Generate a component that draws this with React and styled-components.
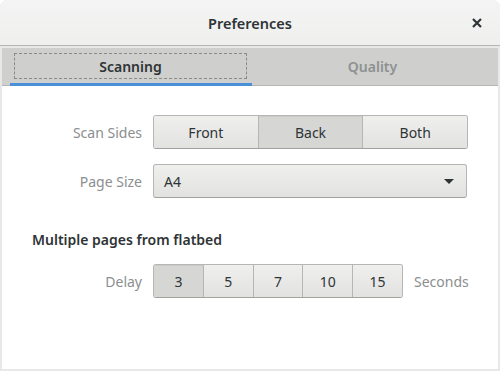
import styled, { createGlobalStyle } from 'styled-components';

const GlobalStyle = createGlobalStyle`
  html, body {
    margin: 0;
    background: #ffffff;
  }
  * { box-sizing: border-box; }
`;

const Window = styled.div`
  width: 500px;
  height: 371px;
  display: flex;
  flex-direction: column;
  font-family: "Noto Sans", "Open Sans", sans-serif;
  color: #2e3436;
  border-radius: 7px 7px 0 0;
  overflow: hidden;
  background: #e8e8e7;
`;

const HeaderBar = styled.div`
  height: 46px;
  flex: none;
  display: grid;
  grid-template-columns: 1fr auto 1fr;
  align-items: center;
  background: linear-gradient(#f4f4f4, #efefee);
  border-bottom: 1px solid #b6b6b3;
`;

const Title = styled.div`
  grid-column: 2;
  font-size: 14.5px;
  font-weight: 600;
  color: #2e3436;
`;

const CloseButton = styled.div`
  grid-column: 3;
  justify-self: end;
  margin-right: 16px;
  width: 14px;
  height: 14px;
  display: flex;
  align-items: center;
  justify-content: center;
`;

const Frame = styled.div`
  flex: 1;
  display: flex;
  flex-direction: column;
  padding: 2px;
`;

const TabBar = styled.div`
  height: 38px;
  flex: none;
  display: flex;
  padding: 0 4px 0 8px;
  background: #cfcfcd;
  border-bottom: 1px solid #b6b6b3;
`;

const Tab = styled.div`
  flex: 1;
  display: flex;
  padding: 5px 5px 4px 4px;
  border-bottom: 3px solid ${p => (p.$active ? '#4a90d9' : 'transparent')};
  margin-bottom: -1px;
`;

const TabLabel = styled.div`
  flex: 1;
  display: flex;
  align-items: center;
  justify-content: center;
  font-size: 14px;
  font-weight: 600;
  color: ${p => (p.$active ? '#2e3436' : '#8e9192')};
  border: 1px dashed ${p => (p.$focused ? '#8a8a88' : 'transparent')};
`;

const Page = styled.div`
  flex: 1;
  background: #ffffff;
  padding: 29px 31px 0 28px;
  display: flex;
  flex-direction: column;
`;

const Row = styled.div`
  display: grid;
  grid-template-columns: 112px auto auto;
  justify-content: start;
  column-gap: 11px;
  align-items: center;
  margin-bottom: ${p => p.$gap || 0}px;
`;

const Label = styled.div`
  font-size: 14px;
  color: #8b8e8f;
  text-align: right;
`;

const Linked = styled.div`
  display: flex;
  width: ${p => p.$width}px;
  height: 34px;
  border: 1px solid #b6b6b3;
  border-bottom-color: #a1a19e;
  border-radius: 3px;
  overflow: hidden;
`;

const Segment = styled.div`
  flex: 1;
  display: flex;
  align-items: center;
  justify-content: center;
  font-size: 14px;
  color: #2e3436;
  background: ${p =>
    p.$pressed ? '#d6d6d4' : 'linear-gradient(#efefee, #e2e2e0)'};
  box-shadow: ${p => (p.$pressed ? 'inset 0 1px 1px rgba(0,0,0,0.06)' : 'none')};
  & + & {
    border-left: 1px solid #b6b6b3;
  }
`;

const Combo = styled.div`
  width: 314px;
  height: 34px;
  display: flex;
  align-items: center;
  justify-content: space-between;
  padding: 0 10px;
  border: 1px solid #b6b6b3;
  border-bottom-color: #a1a19e;
  border-radius: 3px;
  background: linear-gradient(#efefee, #e2e2e0);
  font-size: 14px;
`;

const Arrow = styled.div`
  width: 0;
  height: 0;
  border-left: 5px solid transparent;
  border-right: 5px solid transparent;
  border-top: 5px solid #2e3436;
  margin-right: 2px;
`;

const SectionTitle = styled.div`
  font-size: 14px;
  font-weight: 600;
  color: #2e3436;
  margin: 0 0 15px 2px;
`;

const Unit = styled.div`
  font-size: 14px;
  color: #8b8e8f;
`;

const sides = ['Front', 'Back', 'Both'];
const delays = ['3', '5', '7', '10', '15'];

export default function App() {
  return (
    <>
      <GlobalStyle />
      <Window>
        <HeaderBar>
          <Title>Preferences</Title>
          <CloseButton>
            <svg width="10" height="10" viewBox="0 0 10 10">
              <path d="M1 1 L9 9 M9 1 L1 9" stroke="#2e3436" strokeWidth="2.2" />
            </svg>
          </CloseButton>
        </HeaderBar>
        <Frame>
          <TabBar>
            <Tab $active>
              <TabLabel $active $focused>Scanning</TabLabel>
            </Tab>
            <Tab>
              <TabLabel>Quality</TabLabel>
            </Tab>
          </TabBar>
          <Page>
            <Row $gap={15}>
              <Label>Scan Sides</Label>
              <Linked $width={315}>
                {sides.map(s => (
                  <Segment key={s} $pressed={s === 'Back'}>{s}</Segment>
                ))}
              </Linked>
            </Row>
            <Row $gap={32}>
              <Label>Page Size</Label>
              <Combo>
                <span>A4</span>
                <Arrow />
              </Combo>
            </Row>
            <SectionTitle>Multiple pages from flatbed</SectionTitle>
            <Row>
              <Label>Delay</Label>
              <Linked $width={250}>
                {delays.map(d => (
                  <Segment key={d} $pressed={d === '3'}>{d}</Segment>
                ))}
              </Linked>
              <Unit>Seconds</Unit>
            </Row>
          </Page>
        </Frame>
      </Window>
    </>
  );
}
